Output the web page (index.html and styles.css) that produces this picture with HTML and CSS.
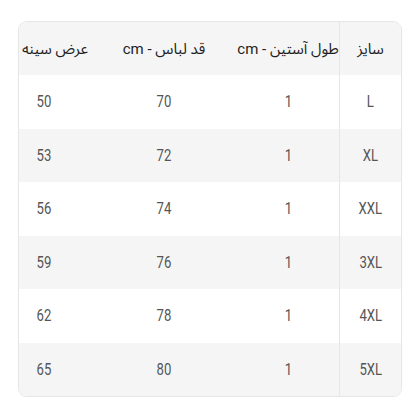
FILE: index.html
```html
<!DOCTYPE html>
<html lang="fa">
<head>
<meta charset="utf-8">
<link rel="stylesheet" href="styles.css">
</head>
<body>
<div class="page">
  <div class="table" dir="rtl">
    <div class="row head">
      <div class="cell c1">سایز</div>
      <div class="cell c2">طول آستین - cm</div>
      <div class="cell c3">قد لباس - cm</div>
      <div class="cell c4">عرض سینه</div>
    </div>
    <div class="row">
      <div class="cell c1"><span class="n">L</span></div>
      <div class="cell c2"><span class="n">1</span></div>
      <div class="cell c3"><span class="n">70</span></div>
      <div class="cell c4 num"><span class="n">50</span></div>
    </div>
    <div class="row alt">
      <div class="cell c1"><span class="n">XL</span></div>
      <div class="cell c2"><span class="n">1</span></div>
      <div class="cell c3"><span class="n">72</span></div>
      <div class="cell c4 num"><span class="n">53</span></div>
    </div>
    <div class="row">
      <div class="cell c1"><span class="n">XXL</span></div>
      <div class="cell c2"><span class="n">1</span></div>
      <div class="cell c3"><span class="n">74</span></div>
      <div class="cell c4 num"><span class="n">56</span></div>
    </div>
    <div class="row alt">
      <div class="cell c1"><span class="n">3XL</span></div>
      <div class="cell c2"><span class="n">1</span></div>
      <div class="cell c3"><span class="n">76</span></div>
      <div class="cell c4 num"><span class="n">59</span></div>
    </div>
    <div class="row">
      <div class="cell c1"><span class="n">4XL</span></div>
      <div class="cell c2"><span class="n">1</span></div>
      <div class="cell c3"><span class="n">78</span></div>
      <div class="cell c4 num"><span class="n">62</span></div>
    </div>
    <div class="row alt">
      <div class="cell c1"><span class="n">5XL</span></div>
      <div class="cell c2"><span class="n">1</span></div>
      <div class="cell c3"><span class="n">80</span></div>
      <div class="cell c4 num"><span class="n">65</span></div>
    </div>
  </div>
</div>
</body>
</html>
```
FILE: styles.css
```css
html, body {
  margin: 0;
  padding: 0;
  background: #ffffff;
}
.page {
  padding: 21px 18px 0 18px;
  font-family: Roboto, "Noto Sans Arabic", "DejaVu Sans", sans-serif;
}
.table {
  width: 384px;
  box-sizing: border-box;
  border: 1px solid #e6e6e6;
  border-radius: 9px;
  overflow: hidden;
  box-shadow: 0 1px 2px rgba(0,0,0,0.04);
}
.row {
  display: grid;
  grid-template-columns: 62px 102px 146px 72px;
  height: 53.5px;
  background: #ffffff;
}
.row.head {
  height: 53px;
  background: #f5f5f5;
}
.row.alt {
  background: #f5f5f5;
}
.cell {
  display: flex;
  align-items: center;
  justify-content: center;
  white-space: nowrap;
  color: #555555;
  font-size: 16px;
}
.head .cell {
  color: #1e1e1e;
  font-size: 15px;
}
.c1 {
  border-left: 1px solid #e6e6e6;
}
.c4.num {
  justify-content: flex-end;
  padding-left: 16px;
}
.n {
  display: inline-block;
  transform: scaleX(0.82);
}
```
